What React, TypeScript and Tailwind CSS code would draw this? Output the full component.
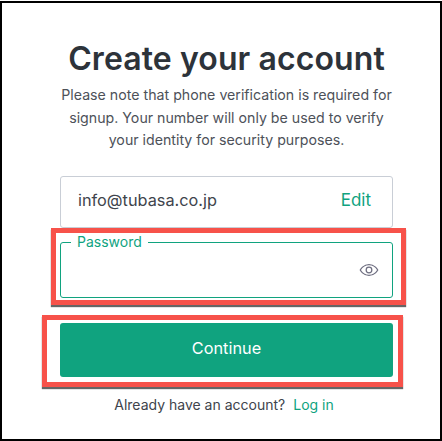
import React from 'react';

const App: React.FC = () => {
    return (
        <div className="relative w-[442px] h-[441px] bg-white font-['Inter',sans-serif] overflow-hidden">
            <div className="box-border w-[442px] h-[440px] mt-px border-2 border-black flex flex-col pl-[58px] pr-[47px] pt-[38px]">
                <h1 className="text-[32px] leading-[36px] font-semibold tracking-[0.1px] text-[#2d333a] text-center whitespace-nowrap">Create your account</h1>
                <p className="mt-[7px] text-[14.2px] leading-[22.5px] text-[#4d5159] text-center whitespace-nowrap">
                    Please note that phone verification is required for<br />
                    signup. Your number will only be used to verify<br />
                    your identity for security purposes.
                </p>
                <div className="mt-[24px] h-[52px] pb-[2px] border border-[#c9ced6] rounded-[3px] flex items-center justify-between pl-[17px] pr-[21px] text-[16.3px] text-[#40444c]">
                    <span>info@tubasa.co.jp</span>
                    <span className="text-[#10a37f] text-[17px]">Edit</span>
                </div>
                <div className="relative mt-[14px] h-[56px] border border-[#10a37f] rounded-[3px] flex items-center justify-end pr-[13px]">
                    <span className="absolute left-[10px] top-[-9px] bg-white px-[6px] text-[14px] leading-[16px] text-[#10a37f]">Password</span>
                    <svg width="20" height="20" viewBox="0 0 24 24" fill="none" stroke="#6e6e80" strokeWidth="1.5">
                        <path d="M1.5 12s3.8-6.5 10.5-6.5S22.5 12 22.5 12s-3.8 6.5-10.5 6.5S1.5 12 1.5 12z" />
                        <circle cx="12" cy="12" r="3.4" />
                    </svg>
                </div>
                <button className="mt-[25px] h-[54px] pb-[3px] bg-[#10a37f] rounded-[3px] text-white text-[16.3px]">Continue</button>
                <p className="mt-[19px] pr-[5px] text-[14px] leading-[18px] text-center text-[#40444c] whitespace-nowrap">
                    Already have an account?<span className="ml-[8px] text-[#10a37f]">Log in</span>
                </p>
            </div>
            {/* red annotation boxes */}
            <div className="absolute left-[51px] top-[228px] w-[355px] h-[77px] border-[5px] border-[#f7524a] shadow-[0_2px_1px_rgba(0,0,0,0.6)]" />
            <div className="absolute left-[42px] top-[315px] w-[361px] h-[72px] border-[5px] border-[#f7524a] shadow-[0_2px_1px_rgba(0,0,0,0.6)]" />
        </div>
    );
};

export default App;
